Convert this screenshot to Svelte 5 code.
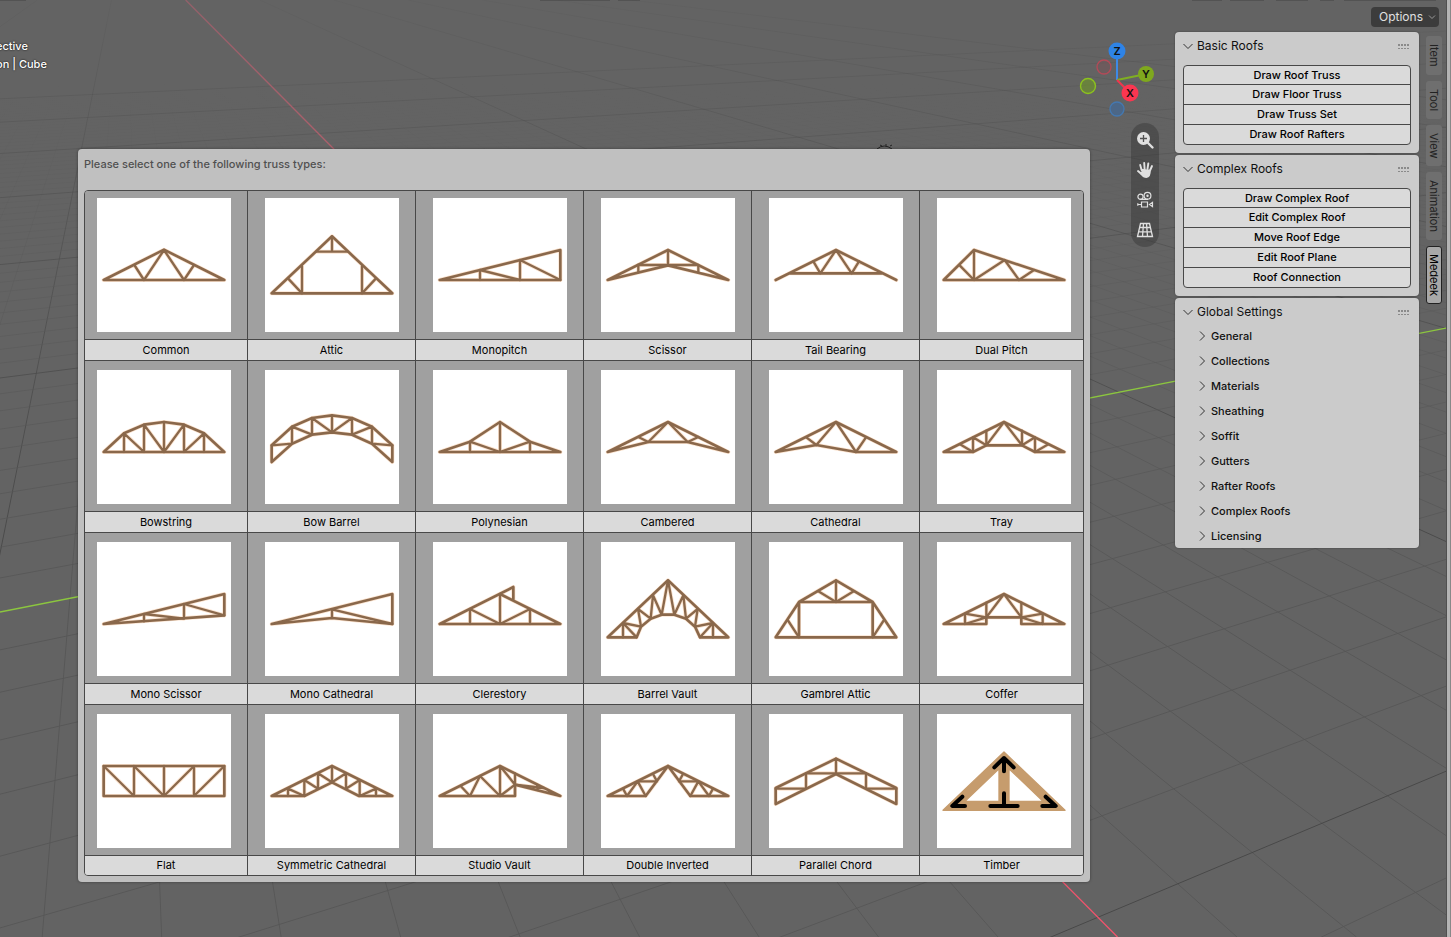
<script lang="ts">
  type Truss = { name: string; chords: string; webs: string };

  // members are drawn on a 402 x 402 tile
  const trusses: Truss[] = [
    { name: 'Common', chords: 'M20 246H382L201 155Z', webs: 'M112 201L141 246L201 156L261 246L291 201' },
    {
      name: 'Attic',
      chords: 'M20 286H382L201 115Z',
      webs: 'M111 204V286M291 204V286M154 161H248M201 115V161M69 241L111 286M333 241L291 286',
    },
    { name: 'Monopitch', chords: 'M20 246H382V156Z', webs: 'M141 246V216L261 246V186L382 246' },
    {
      name: 'Scissor',
      chords: 'M20 246L201 156L382 246L201 202Z',
      webs: 'M201 156V202M110 201H292M112 201V223M292 201V223',
    },
    {
      name: 'Tail Bearing',
      chords: 'M20 246L201 156L382 246M60 226H342',
      webs: 'M133 190L154 226L201 156L248 226L270 190',
    },
    {
      name: 'Dual Pitch',
      chords: 'M20 246L111 156L382 246Z',
      webs: 'M111 156V246M68 202L111 246L203 186L246 246L291 216',
    },
    {
      name: 'Bowstring',
      chords: 'M20 246L81 190L141 164L201 156L261 164L321 190L382 246Z',
      webs: 'M81 246V190L141 246V164L201 246V156M201 246L261 164V246L321 190V246',
    },
    {
      name: 'Bow Barrel',
      chords: 'M20 226L81 170L141 144L201 136L261 144L321 170L382 226V276L321 221L261 194L201 187L141 194L81 221L20 276Z',
      webs: 'M20 226L81 221V170L141 194V144L201 187V136M201 187L261 144V194L321 170V221L382 226',
    },
    {
      name: 'Polynesian',
      chords: 'M20 246L111 215L201 156L291 215L382 246Z',
      webs: 'M111 246V215L201 246V156M201 246L291 215V246',
    },
    {
      name: 'Cambered',
      chords: 'M20 246L201 156L382 246L260 216H142Z',
      webs: 'M112 201L142 216L201 156L260 216L292 201',
    },
    {
      name: 'Cathedral',
      chords: 'M20 246L201 156L382 246H261L142 225Z',
      webs: 'M112 202L142 225L201 156L261 246L291 202',
    },
    {
      name: 'Tray',
      chords: 'M20 246L201 156L382 246H294L255 226H148L108 246Z',
      webs: 'M69 223L108 246V202L148 226V182M148 226L201 156L255 226V182M255 226L294 202V246L334 223',
    },
    { name: 'Mono Scissor', chords: 'M20 246L382 156V220Z', webs: 'M141 238V216L261 230V186L382 220' },
    { name: 'Mono Cathedral', chords: 'M20 246L382 156V246L201 228Z', webs: 'M201 228V202L382 246' },
    {
      name: 'Clerestory',
      chords: 'M20 246L241 135V176M201 156L382 246H20',
      webs: 'M201 156V246M111 246V201L201 246L291 201V246',
    },
    {
      name: 'Barrel Vault',
      chords: 'M20 286L201 115L382 286H297L282 254L255 230L220 218H182L149 230L120 254L107 286Z',
      webs: 'M66 286V243L107 286M66 243L120 254L111 201L149 230L156 160L182 218L201 115L220 218L247 160L255 230L290 201L282 254L336 243L297 286M336 243V286',
    },
    {
      name: 'Gambrel Attic',
      chords: 'M20 286L90 180L201 115L311 180L382 286ZM90 286V180H311V286',
      webs: 'M201 115V180M148 148L201 180L254 148M56 234L90 286M345 234L311 286',
    },
    {
      name: 'Coffer',
      chords: 'M20 246L201 156L382 246H253V226H148V246Z',
      webs: 'M84 246V215L148 226V182M84 246L148 226L201 156L253 226V182M317 246V215L253 226L317 246',
    },
    {
      name: 'Flat',
      chords: 'M20 156H382V246H20Z',
      webs: 'M20 156L111 246V156L201 246V156M201 246L291 156V246L382 156',
    },
    {
      name: 'Symmetric Cathedral',
      chords: 'M20 246L201 156L382 246H282L201 205L118 246Z',
      webs: 'M69 246V224L118 246V198L159 224V178L201 205V156M201 205L243 178V224L284 198V246L333 224V246',
    },
    {
      name: 'Studio Vault',
      chords: 'M20 246L201 156L382 246L246 212V246Z',
      webs: 'M83 216L111 246L141 186L201 246V156L246 212L201 246M246 178V212L332 222M313 213V228',
    },
    {
      name: 'Double Inverted',
      chords: 'M20 246L201 156L134 246ZM382 246L201 156L268 246Z',
      webs: 'M134 246L110 202H168L156 180M110 202L78 246L66 224M268 246L292 202H234L246 180M292 202L324 246L336 224',
    },
    {
      name: 'Parallel Chord',
      chords: 'M20 222L201 134L382 222V270L201 180L20 270Z',
      webs: 'M20 224H111V178H291V224H382M201 134V180',
    },
    { name: 'Timber', chords: '', webs: '' },
  ];

  const panels = [
    { title: 'Basic Roofs', actions: ['Draw Roof Truss', 'Draw Floor Truss', 'Draw Truss Set', 'Draw Roof Rafters'] },
    {
      title: 'Complex Roofs',
      actions: ['Draw Complex Roof', 'Edit Complex Roof', 'Move Roof Edge', 'Edit Roof Plane', 'Roof Connection'],
    },
  ];

  const settings = [
    'General', 'Collections', 'Materials', 'Sheathing', 'Soffit',
    'Gutters', 'Rafter Roofs', 'Complex Roofs', 'Licensing',
  ];

  const tabs = ['Item', 'Tool', 'View', 'Animation', 'Medeek'];
  let activeTab = $state('Medeek');

  // floor grid in perspective: both families of lines meet on the horizon
  const horizon = -62;
  const vanishX = 124;
  const vanishY = 3432;

  function lineAlongX(j: number) {
    const run = 0.9945 + 0.1196 * j;
    return { x1: vanishX - horizon * run, y1: 0, x2: vanishX + (937 - horizon) * run, y2: 937 };
  }

  function lineAlongY(i: number) {
    const fall = 544 / (2770 + 3311 * 0.0445 * i);
    return { x1: 0, y1: horizon + vanishY * fall, x2: 1451, y2: horizon + (vanishY - 1451) * fall };
  }

  function range(from: number, to: number) {
    return Array.from({ length: to - from + 1 }, (_, n) => from + n).filter((n) => n !== 0);
  }

  const gridLines = [
    ...range(-22, 60).map((j) => ({ major: j % 10 === 0, ...lineAlongX(j) })),
    ...range(-14, 60).map((i) => ({ major: i % 10 === 0, ...lineAlongY(i) })),
  ];
  const redAxis = lineAlongX(0);
  const greenAxis = lineAlongY(0);
</script>

<div class="viewport">
  <svg class="scene" viewBox="0 0 1451 937" preserveAspectRatio="xMidYMid slice" aria-hidden="true">
    <defs>
      <linearGradient id="minor" gradientUnits="userSpaceOnUse" x1="0" y1="80" x2="0" y2="620">
        <stop offset="0" stop-color="#565656" stop-opacity="0" />
        <stop offset="0.4" stop-color="#565656" stop-opacity="0.35" />
        <stop offset="1" stop-color="#565656" stop-opacity="0.9" />
      </linearGradient>
      <linearGradient id="major" gradientUnits="userSpaceOnUse" x1="0" y1="0" x2="0" y2="600">
        <stop offset="0" stop-color="#4c4c4c" stop-opacity="0.1" />
        <stop offset="0.4" stop-color="#4c4c4c" stop-opacity="0.6" />
        <stop offset="1" stop-color="#484848" />
      </linearGradient>
      <linearGradient id="red" gradientUnits="userSpaceOnUse" x1="0" y1="0" x2="0" y2="937">
        <stop offset="0" stop-color="#94606a" />
        <stop offset="0.2" stop-color="#b45f6c" />
        <stop offset="1" stop-color="#f4526c" />
      </linearGradient>
    </defs>
    {#each gridLines as l}
      <line x1={l.x1} y1={l.y1} x2={l.x2} y2={l.y2} stroke={l.major ? 'url(#major)' : 'url(#minor)'} />
    {/each}
    <line x1={redAxis.x1} y1={redAxis.y1} x2={redAxis.x2} y2={redAxis.y2} stroke="url(#red)" stroke-width="1.3" />
    <line x1={greenAxis.x1} y1={greenAxis.y1} x2={greenAxis.x2} y2={greenAxis.y2} stroke="#8cc63f" stroke-width="1.3" />
    <path d="M877 149q7-6 15 0M880 145l2 1M886 144v2M890 146l2-1" fill="none" stroke="#222" />
    <path d="M0 0H26M540 0H610M618 0H640M1192 0H1222M1230 0H1264M1276 0H1308M1320 0H1334M1344 0H1436" stroke="#444" />
  </svg>

  <main class="workspace">
    <div class="view-info">
      <div>ective</div>
      <div>on | Cube</div>
    </div>

    <section class="dialog" aria-labelledby="dialog-title">
      <h1 id="dialog-title">Please select one of the following truss types:</h1>
      <div class="trusses">
        {#each trusses as truss}
          <button class="truss">
            <span class="thumb">
              <svg viewBox="0 0 402 402" aria-hidden="true">
                {#if truss.name === 'Timber'}
                  <path class="beam" fill-rule="evenodd" d="M18 289L201 114L384 289ZM84 262L186 164V262ZM216 262V164L318 262Z" />
                  <path class="arrow" d="M201 172V132M172 160L201 132L230 160M76 248L46 276H84M326 248L356 276H316M201 238V276M160 276H242" />
                {:else}
                  <path class="halo" d={truss.chords + truss.webs} />
                  <path class="web" d={truss.webs} />
                  <path class="chord" d={truss.chords} />
                {/if}
              </svg>
            </span>
            <span class="name">{truss.name}</span>
          </button>
        {/each}
      </div>
    </section>
  </main>

  <aside class="nav">
    <svg class="gizmo" viewBox="0 0 80 80" role="img" aria-label="Orientation">
      <circle cx="25" cy="27" r="7" fill="#7c4f55" fill-opacity="0.4" stroke="#b54a58" stroke-width="1.3" />
      <circle cx="9" cy="46" r="7.5" fill="#6b8a35" fill-opacity="0.8" stroke="#8cc21e" stroke-width="1.4" />
      <circle cx="38" cy="69" r="7" fill="#4c6787" stroke="#4478b0" stroke-width="1.3" />
      <path d="M38 40V11" stroke="#3d8ae6" stroke-width="2" />
      <path d="M38 40L67 34" stroke="#7fae22" stroke-width="2" />
      <path d="M38 40L51 53" stroke="#f0364f" stroke-width="2" />
      <circle cx="38" cy="11" r="8.5" fill="#2e83e6" />
      <circle cx="67" cy="34" r="8" fill="#7fa81e" />
      <circle cx="51" cy="53" r="8.5" fill="#fb3650" />
      <text x="38" y="15">Z</text>
      <text x="67" y="38">Y</text>
      <text x="51" y="57">X</text>
    </svg>
    <div class="tools">
      <button aria-label="Zoom">
        <svg viewBox="0 0 20 20">
          <circle cx="8.5" cy="8.5" r="6.5" fill="#e0e0e0" />
          <path d="M8.5 5V12M5 8.5H12" stroke="#505050" stroke-width="1.3" />
          <path d="M13 13L17.5 17.5" stroke="#e0e0e0" stroke-width="2.4" stroke-linecap="round" />
        </svg>
      </button>
      <button aria-label="Move">
        <svg viewBox="0 0 20 20">
          <path d="M6.6 10L5.2 5M9.6 9L9.2 3M12.5 9L13.3 3.5M15 10.5L17 6M6.5 14L3 11" fill="none" stroke="#e0e0e0" stroke-width="1.9" stroke-linecap="round" />
          <path d="M5.7 8.8L15.8 9.8Q16 17.8 11.5 18Q8 18 6 15L3.5 11.8L6.5 12Z" fill="#e0e0e0" />
        </svg>
      </button>
      <button aria-label="Camera view">
        <svg viewBox="0 0 20 20" fill="none" stroke="#e0e0e0" stroke-width="1.2">
          <circle cx="5.5" cy="6.8" r="2.6" />
          <circle cx="12.5" cy="5.8" r="3.4" />
          <circle cx="12.5" cy="5.8" r="0.6" />
          <path d="M5 9.4H13M6.5 12H12.5V17H6.5ZM6.5 14.5H3M2.8 13.2V15.8M14.5 14.5L17.5 12.4V16.6Z" />
        </svg>
      </button>
      <button aria-label="Toggle perspective">
        <svg viewBox="0 0 20 20" fill="none" stroke="#e0e0e0" stroke-width="1.3">
          <path d="M5.5 3.5H14.5L17.5 16.5H2.5ZM4.7 7.5H15.3M3.7 11.8H16.3M8.5 3.5L7.5 16.5M11.5 3.5L12.5 16.5" />
        </svg>
      </button>
    </div>
  </aside>

  <div class="side">
    <div class="side-top">
      <button class="options">
        Options
        <svg class="chevron" viewBox="0 0 10 10"><path d="M2 3.5L5 6.5L8 3.5" /></svg>
      </button>
    </div>
    <div class="side-body">
      <div class="panels">
        {#each panels as panel}
          <section class="panel">
            <button class="panel-title">
              <svg class="chevron" viewBox="0 0 10 10"><path d="M0.5 3L5 7.5L9.5 3" /></svg>
              {panel.title}
              <span class="grip"></span>
            </button>
            <div class="actions">
              {#each panel.actions as action}
                <button>{action}</button>
              {/each}
            </div>
          </section>
        {/each}
        <section class="panel">
          <button class="panel-title">
            <svg class="chevron" viewBox="0 0 10 10"><path d="M0.5 3L5 7.5L9.5 3" /></svg>
            Global Settings
            <span class="grip"></span>
          </button>
          <div class="settings">
            {#each settings as setting}
              <button>
                <svg class="chevron" viewBox="0 0 10 10"><path d="M3 0.5L7.5 5L3 9.5" /></svg>
                {setting}
              </button>
            {/each}
          </div>
        </section>
      </div>
      <div class="tabs" role="tablist" aria-orientation="vertical">
        {#each tabs as tab}
          <button role="tab" aria-selected={tab === activeTab} class:active={tab === activeTab} onclick={() => (activeTab = tab)}>
            {tab}
          </button>
        {/each}
      </div>
    </div>
  </div>
  <div class="edge"></div>
</div>

<style>
  :global(body) {
    margin: 0;
    background: #636363;
  }

  .viewport {
    position: relative;
    display: flex;
    min-height: 100vh;
    overflow: hidden;
    box-sizing: border-box;
    background: #636363;
    color: #111;
    font-family: Inter, "Liberation Sans", sans-serif;
    font-size: 11px;
    line-height: 18px;
  }

  .scene {
    position: absolute;
    inset: 0;
    width: 100%;
    height: 100%;
  }

  .workspace,
  .nav,
  .side,
  .edge {
    position: relative;
  }

  button {
    margin: 0;
    padding: 0;
    border: 0;
    background: none;
    color: inherit;
    font: inherit;
    cursor: pointer;
  }

  .workspace {
    flex: 1;
    min-width: 0;
  }

  .view-info {
    height: 149px;
    padding-top: 37px;
    box-sizing: border-box;
    color: #fff;
    font-weight: 500;
    text-indent: -4px;
    text-shadow: 0 0 2px #000;
  }

  .dialog {
    margin-left: 78px;
    padding: 6px;
    border-radius: 4px;
    background: #c0c0c0;
    box-shadow: 0 0 3px rgba(0, 0, 0, 0.4);
  }

  h1 {
    margin: 0 0 17px;
    color: #505050;
    font-size: 11px;
    font-weight: 500;
    line-height: 18px;
  }

  .trusses {
    display: grid;
    grid-template-columns: 163fr repeat(4, 168fr) 163fr;
    overflow: hidden;
    border: 1px solid #484848;
    border-radius: 4px;
  }

  .truss {
    display: flex;
    flex-direction: column;
    min-width: 0;
    border-right: 1px solid #484848;
    border-bottom: 1px solid #484848;
    background: #a0a0a0;
  }

  .truss:nth-child(6n) {
    border-right: 0;
  }

  .truss:nth-child(n + 19) {
    border-bottom: 0;
  }

  .thumb {
    display: flex;
    justify-content: center;
    align-self: stretch;
    padding: 9px 16px 7px;
  }

  .truss:nth-child(-n + 6) .thumb {
    padding-top: 7px;
  }

  .truss:nth-child(6n + 1) .thumb {
    justify-content: flex-end;
    padding-left: 0;
  }

  .truss:nth-child(6n) .thumb {
    justify-content: flex-start;
    padding-right: 0;
    padding-left: 17px;
  }

  .thumb svg {
    flex: none;
    width: 134px;
    height: 134px;
    background: #fff;
  }

  .thumb path {
    fill: none;
    stroke: #8a684b;
    stroke-linejoin: round;
    stroke-linecap: round;
  }

  .thumb .halo {
    stroke: #fbe3cf;
    stroke-width: 12;
  }

  .thumb .web {
    stroke-width: 7;
  }

  .thumb .chord {
    stroke-width: 8;
  }

  .thumb .beam {
    fill: #c69c6d;
    stroke: #c69c6d;
    stroke-width: 4;
  }

  .thumb .arrow {
    stroke: #000;
    stroke-width: 12;
  }

  .name {
    align-self: stretch;
    border-top: 1px solid #484848;
    background: #dadada;
    color: #000;
    line-height: 20px;
  }

  .truss:nth-child(n + 19) .name {
    line-height: 19px;
  }

  .nav {
    display: flex;
    flex-direction: column;
    align-items: flex-end;
    width: 85px;
    padding: 40px 16px 0 0;
    box-sizing: border-box;
  }

  .gizmo {
    flex: none;
    width: 80px;
    height: 80px;
  }

  .gizmo text {
    fill: #111;
    font-size: 11px;
    font-weight: 600;
    text-anchor: middle;
  }

  .tools {
    display: flex;
    flex-direction: column;
    gap: 10px;
    margin-top: 3px;
    padding: 7px 4px;
    border-radius: 14px;
    background: rgba(48, 48, 48, 0.4);
  }

  .tools button,
  .tools svg {
    display: block;
    width: 20px;
    height: 20px;
  }

  .side {
    width: 271px;
  }

  .side-top {
    display: flex;
    justify-content: flex-end;
    height: 32px;
    padding: 7px 7px 0 0;
    box-sizing: border-box;
  }

  .options {
    display: flex;
    align-items: center;
    gap: 4px;
    height: 20px;
    padding: 0 2px 0 8px;
    border-radius: 4px;
    background: #3c3c3c;
    color: #e0e0e0;
    font-size: 12px;
  }

  .chevron {
    flex: none;
    width: 10px;
    height: 10px;
    fill: none;
    stroke: #333;
    stroke-width: 1;
  }

  .options .chevron {
    stroke: #999;
  }

  .side-body {
    display: flex;
    gap: 7px;
  }

  .panels {
    display: flex;
    flex: 1;
    flex-direction: column;
    gap: 2px;
  }

  .panel {
    border-radius: 4px;
    background: #cbcbcb;
    box-shadow: 0 0 2px rgba(0, 0, 0, 0.4);
  }

  .panel-title {
    display: flex;
    align-items: center;
    gap: 4px;
    width: 100%;
    height: 26px;
    padding: 2px 10px 0 8px;
    font-size: 12px;
  }

  .grip {
    width: 11px;
    height: 5px;
    margin-left: auto;
    background: radial-gradient(circle at 1px 1px, #8a8a8a 0 1px, transparent 1px) 0 0 / 3px 4px;
  }

  .actions {
    display: flex;
    flex-direction: column;
    margin: 7px 8px 0;
    overflow: hidden;
    border: 1px solid #484848;
    border-radius: 4px;
    background: #dadada;
  }

  .panel:has(.actions) {
    padding-bottom: 8px;
  }

  .actions button {
    height: 20px;
    padding-bottom: 1px;
    border-top: 1px solid #484848;
    color: #000;
    font-weight: 500;
    line-height: 18px;
  }

  .actions button:first-child {
    height: 18px;
    padding-bottom: 0;
    border-top: 0;
  }

  .settings {
    margin-top: -1px;
  }

  .settings button {
    display: flex;
    align-items: center;
    gap: 4px;
    width: 100%;
    height: 25px;
    padding-left: 22px;
    font-weight: 500;
  }

  .tabs {
    display: flex;
    flex-direction: column;
    align-items: flex-start;
    gap: 6px;
    width: 20px;
    padding-top: 4px;
  }

  .tabs button {
    width: 16px;
    padding: 8px 0;
    border-radius: 3px;
    box-sizing: border-box;
    background: #6f6f6f;
    color: #222;
    font-size: 11px;
    line-height: 16px;
    writing-mode: vertical-rl;
  }

  .tabs .active {
    padding: 7px 0;
    border: 1px solid #222;
    background: #a8a8a8;
    color: #000;
    line-height: 14px;
  }

  .edge {
    width: 3px;
    border-left: 1px solid #505050;
    border-right: 1px solid #888;
    background: #b4b4b4;
  }
</style>
